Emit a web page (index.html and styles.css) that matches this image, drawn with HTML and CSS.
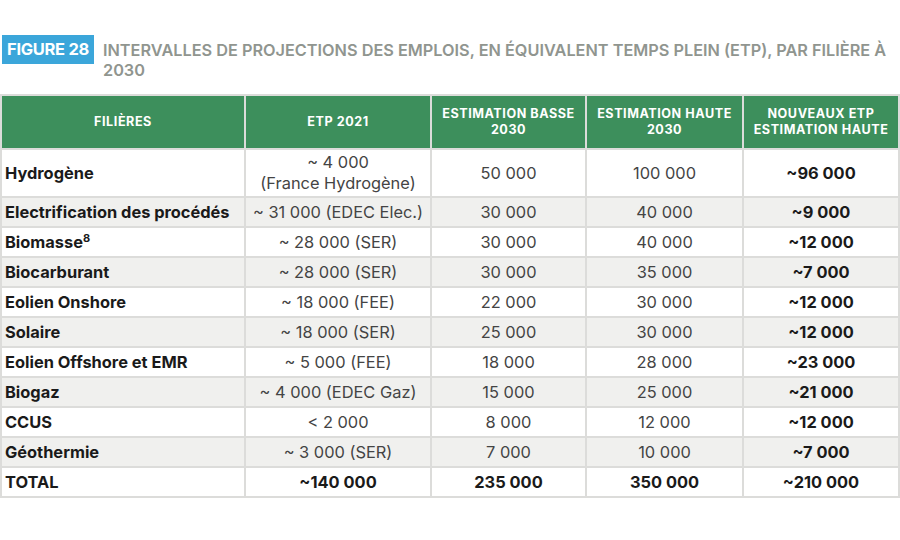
FILE: index.html
```html
<!DOCTYPE html>
<html lang="fr">
<head>
<meta charset="utf-8">
<link rel="stylesheet" href="styles.css">
</head>
<body>
<div class="page">
  <div class="title">
    <span class="badge">FIGURE 28</span>
    <h1 class="heading">INTERVALLES DE PROJECTIONS DES EMPLOIS, EN ÉQUIVALENT TEMPS PLEIN (ETP), PAR FILIÈRE À 2030</h1>
  </div>
  <table class="grid">
    <colgroup>
      <col class="c1"><col class="c2"><col class="c3"><col class="c4"><col class="c5">
    </colgroup>
    <thead>
      <tr>
        <th>FILIÈRES</th>
        <th>ETP 2021</th>
        <th>ESTIMATION BASSE<br>2030</th>
        <th>ESTIMATION HAUTE<br>2030</th>
        <th>NOUVEAUX ETP<br>ESTIMATION HAUTE</th>
      </tr>
    </thead>
    <tbody>
      <tr class="tall">
        <td class="name">Hydrogène</td>
        <td>~ 4 000<br>(France Hydrogène)</td>
        <td>50 000</td><td>100 000</td><td class="strong">~96 000</td>
      </tr>
      <tr class="shade">
        <td class="name">Electrification des procédés</td>
        <td>~ 31 000 (EDEC Elec.)</td>
        <td>30 000</td><td>40 000</td><td class="strong">~9 000</td>
      </tr>
      <tr>
        <td class="name">Biomasse<sup>8</sup></td>
        <td>~ 28 000 (SER)</td>
        <td>30 000</td><td>40 000</td><td class="strong">~12 000</td>
      </tr>
      <tr class="shade">
        <td class="name">Biocarburant</td>
        <td>~ 28 000 (SER)</td>
        <td>30 000</td><td>35 000</td><td class="strong">~7 000</td>
      </tr>
      <tr>
        <td class="name">Eolien Onshore</td>
        <td>~ 18 000 (FEE)</td>
        <td>22 000</td><td>30 000</td><td class="strong">~12 000</td>
      </tr>
      <tr class="shade">
        <td class="name">Solaire</td>
        <td>~ 18 000 (SER)</td>
        <td>25 000</td><td>30 000</td><td class="strong">~12 000</td>
      </tr>
      <tr>
        <td class="name">Eolien Offshore et EMR</td>
        <td>~ 5 000 (FEE)</td>
        <td>18 000</td><td>28 000</td><td class="strong">~23 000</td>
      </tr>
      <tr class="shade">
        <td class="name">Biogaz</td>
        <td>~ 4 000 (EDEC Gaz)</td>
        <td>15 000</td><td>25 000</td><td class="strong">~21 000</td>
      </tr>
      <tr>
        <td class="name">CCUS</td>
        <td>&lt; 2 000</td>
        <td>8 000</td><td>12 000</td><td class="strong">~12 000</td>
      </tr>
      <tr class="shade">
        <td class="name">Géothermie</td>
        <td>~ 3 000 (SER)</td>
        <td>7 000</td><td>10 000</td><td class="strong">~7 000</td>
      </tr>
      <tr class="total">
        <td class="name">TOTAL</td>
        <td class="strong">~140 000</td>
        <td class="strong">235 000</td><td class="strong">350 000</td><td class="strong">~210 000</td>
      </tr>
    </tbody>
  </table>
</div>
</body>
</html>
```
FILE: styles.css
```css
html, body {
  margin: 0;
  padding: 0;
  background: #ffffff;
}
body {
  font-family: Inter, "Open Sans", "Liberation Sans", sans-serif;
  color: #2b2b2b;
}
.page {
  width: 900px;
  padding-top: 35px;
}
.title {
  display: flex;
  align-items: flex-start;
  gap: 9px;
  padding-left: 2px;
  height: 59px;
}
.badge {
  background: #3ba6da;
  color: #ffffff;
  font-weight: 700;
  font-size: 16.5px;
  line-height: 29px;
  padding: 0 5px;
  letter-spacing: -0.3px;
  white-space: nowrap;
}
.heading {
  margin: 0;
  padding-top: 5px;
  font-size: 16.3px;
  line-height: 20px;
  font-weight: 600;
  color: #90958f;
  letter-spacing: 0;
}
.grid {
  border-collapse: collapse;
  width: 898px;
  table-layout: fixed;
}
.c1 { width: 244px; }
.c2 { width: 186px; }
.c3 { width: 155px; }
.c4 { width: 157px; }
.c5 { width: 156px; }
.grid th, .grid td {
  border: 2px solid #dcdcda;
  text-align: center;
  padding: 0 4px;
}
.grid th {
  background: #3d8f5c;
  color: #ffffff;
  font-size: 12.6px;
  font-weight: 700;
  letter-spacing: 0.55px;
  line-height: 16px;
  height: 52px;
}
.grid td {
  font-size: 16.4px;
  line-height: 21px;
  height: 28px;
  font-weight: 400;
  color: #444444;
}
.grid tr.tall td {
  height: 46px;
}
.grid tr.shade td {
  background: #f0f0ee;
}
.grid td.name {
  text-align: left;
  padding-left: 3px;
  font-weight: 700;
  color: #1a1a1a;
}
.grid td.strong {
  font-weight: 700;
  color: #1a1a1a;
}
.grid sup {
  font-size: 11px;
  line-height: 0;
}
```
